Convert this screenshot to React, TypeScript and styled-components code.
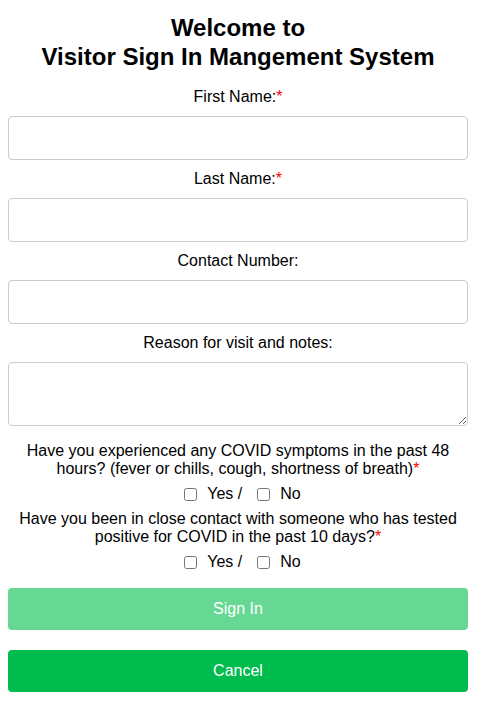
import { useState } from 'react';
import styled, { createGlobalStyle } from 'styled-components';

const GlobalStyle = createGlobalStyle`
  body {
    margin: 8px;
    background: #fff;
    font-family: 'Liberation Sans', Arial, sans-serif;
    color: #000;
  }
`;

type YesNo = 'yes' | 'no' | null;

const App = () => {
  const [symptoms, setSymptoms] = useState<YesNo>(null);
  const [contact, setContact] = useState<YesNo>(null);

  return (
    <>
      <GlobalStyle />
      <Form onSubmit={e => e.preventDefault()}>
        <Title>
          Welcome to
          <br />
          Visitor Sign In Mangement System
        </Title>

        <Label>
          First Name:<Required>*</Required>
        </Label>
        <Input type="text" />

        <Label>
          Last Name:<Required>*</Required>
        </Label>
        <Input type="text" />

        <Label>Contact Number:</Label>
        <Input type="tel" />

        <Label>Reason for visit and notes:</Label>
        <TextArea />

        {/* covid questions */}
        <Question>
          Have you experienced any COVID symptoms in the past 48 hours? (fever or chills, cough,
          shortness of breath)<Required>*</Required>
        </Question>
        <ChoiceRow>
          <Check
            type="checkbox"
            checked={symptoms === 'yes'}
            onChange={() => setSymptoms(symptoms === 'yes' ? null : 'yes')}
          />
          <ChoiceText>Yes /</ChoiceText>
          <Check
            type="checkbox"
            checked={symptoms === 'no'}
            onChange={() => setSymptoms(symptoms === 'no' ? null : 'no')}
          />
          <ChoiceText>No</ChoiceText>
        </ChoiceRow>

        <Question>
          Have you been in close contact with someone who has tested positive for COVID in the
          past 10 days?<Required>*</Required>
        </Question>
        <ChoiceRow>
          <Check
            type="checkbox"
            checked={contact === 'yes'}
            onChange={() => setContact(contact === 'yes' ? null : 'yes')}
          />
          <ChoiceText>Yes /</ChoiceText>
          <Check
            type="checkbox"
            checked={contact === 'no'}
            onChange={() => setContact(contact === 'no' ? null : 'no')}
          />
          <ChoiceText>No</ChoiceText>
        </ChoiceRow>

        <Button type="submit" disabled>
          Sign In
        </Button>
        <Button type="button">Cancel</Button>
      </Form>
    </>
  );
};

export default App;

const Form = styled.form`
  width: 460px;
  display: flex;
  flex-direction: column;
  align-items: stretch;
  text-align: center;
`;

const Title = styled.h2`
  margin: 5px 0 17px;
  font-size: 24px;
  font-weight: 700;
  line-height: 29px;
`;

const Label = styled.label`
  display: block;
  font-size: 16px;
  line-height: 18px;
  margin-bottom: 10px;
`;

const Required = styled.span`
  color: #ff0000;
`;

const Input = styled.input`
  box-sizing: border-box;
  width: 100%;
  height: 44px;
  margin-bottom: 10px;
  padding: 0 10px;
  border: 1px solid #ccc;
  border-radius: 4px;
  font-family: inherit;
  font-size: 16px;
`;

const TextArea = styled.textarea`
  box-sizing: border-box;
  width: 100%;
  height: 64px;
  margin: 0 0 16px;
  padding: 8px 10px;
  border: 1px solid #ccc;
  border-radius: 4px;
  font-family: inherit;
  font-size: 16px;
  display: block;
`;

const Question = styled.p`
  margin: 0;
  font-size: 16px;
  line-height: 18px;
`;

const ChoiceRow = styled.div`
  display: flex;
  justify-content: center;
  align-items: center;
  height: 18px;
  margin: 7px 0 7px;
  padding-left: 9px;
  font-size: 16px;
`;

const Check = styled.input`
  width: 13px;
  height: 13px;
  margin: 0 10px 0 0;
`;

const ChoiceText = styled.span`
  margin-right: 15px;
  &:last-child {
    margin-right: 0;
  }
`;

const Button = styled.button`
  box-sizing: border-box;
  width: 100%;
  height: 42px;
  margin-top: 20px;
  border: none;
  border-radius: 4px;
  background: #00bb4d;
  color: #fff;
  font-family: inherit;
  font-size: 16px;
  cursor: pointer;
  &:first-of-type {
    margin-top: 10px;
  }
  &:disabled {
    background: #66d893;
    cursor: default;
  }
`;
